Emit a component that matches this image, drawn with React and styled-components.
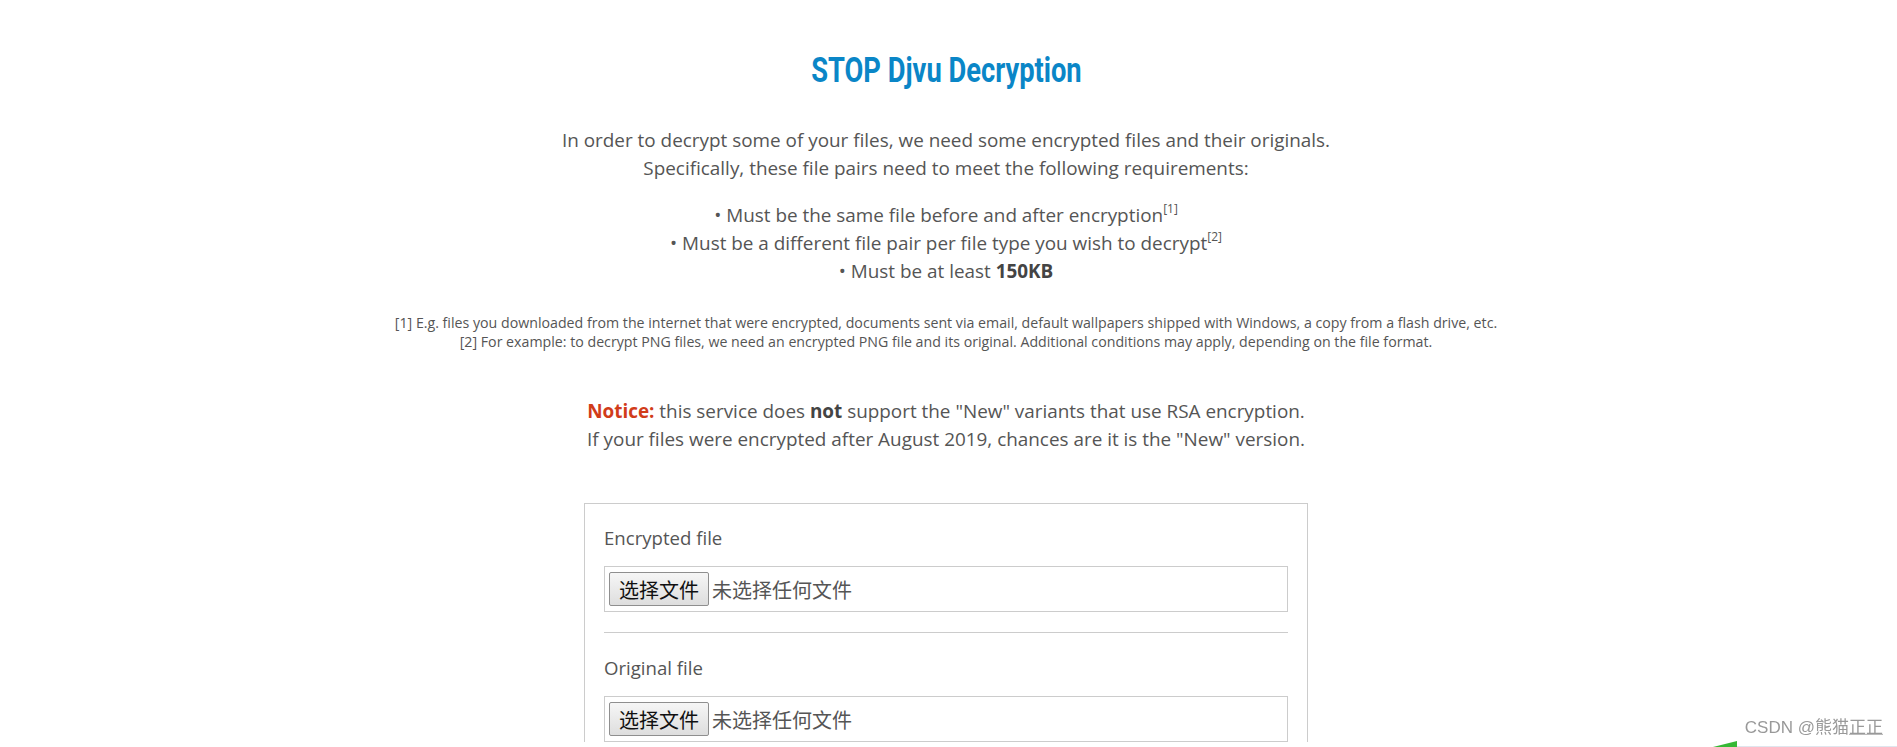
import React from "react";
import styled, { createGlobalStyle } from "styled-components";

const Global = createGlobalStyle`
  html, body {
    margin: 0;
    padding: 0;
    background: #fff;
  }
  body {
    font-family: "Open Sans", "Noto Sans", "Noto Sans CJK SC", sans-serif;
    color: #555;
  }
`;

const Page = styled.main`
  display: flex;
  flex-direction: column;
  align-items: center;
  padding: 51px 5px 0 0;
  text-align: center;
`;

const Title = styled.h1`
  margin: 0;
  font-family: "Roboto", sans-serif;
  font-weight: 700;
  font-size: 35px;
  line-height: 40px;
  color: #0a86c7;
  transform: scaleX(0.78);
`;

const Para = styled.p`
  margin: ${(p) => p.$top || 0}px 0 0;
  font-size: 18.9px;
  line-height: 28px;
  color: #555;
`;

const Sup = styled.sup`
  font-size: 12px;
  line-height: 0;
  vertical-align: 9px;
`;

const Notes = styled.div`
  margin-top: 28px;
  font-size: 14.2px;
  line-height: 19px;
  color: #555;
`;

const Red = styled.strong`
  color: #d13c1a;
`;

const Dark = styled.strong`
  color: #444;
`;

const Card = styled.section`
  margin-top: 50px;
  width: 684px;
  padding: 20px 19px 0;
  border: 1px solid #ccc;
  border-bottom: none;
  text-align: left;
`;

const Label = styled.div`
  font-size: 18.6px;
  line-height: 28px;
  color: #555;
`;

const FileBox = styled.div`
  display: flex;
  align-items: center;
  gap: 3px;
  margin-top: 14px;
  height: 44px;
  padding: 0 4px;
  border: 1px solid #ccc;
`;

const PickButton = styled.button`
  height: 34px;
  padding: 0 9px;
  border: 1px solid #8f8f8f;
  border-radius: 2px;
  background: linear-gradient(#f6f6f6, #dedede);
  font-family: "Noto Sans CJK SC", sans-serif;
  font-size: 20px;
  color: #111;
`;

const NoFile = styled.span`
  font-family: "Noto Sans CJK SC", sans-serif;
  font-size: 20px;
  color: #555;
`;

const Rule = styled.hr`
  margin: 20px 0 21px;
  border: none;
  border-top: 1px solid #ccc;
`;

const Watermark = styled.div`
  position: fixed;
  right: 14px;
  bottom: 9px;
  font-family: "Liberation Sans", "Noto Sans CJK SC", sans-serif;
  font-size: 17px;
  color: #999;
  u {
    text-decoration-color: #bbb;
  }
`;

const Ledge = styled.div`
  position: fixed;
  right: 0;
  bottom: 0;
  width: 163px;
  height: 1px;
  background: #dfe6ee;
`;

const Wedge = styled.div`
  position: fixed;
  right: 160px;
  bottom: 0;
  width: 24px;
  height: 6px;
  background: #35b835;
  clip-path: polygon(0 100%, 100% 0, 100% 100%);
`;

const FileField = ({ label }) => (
  <div>
    <Label>{label}</Label>
    <FileBox>
      <PickButton type="button">选择文件</PickButton>
      <NoFile>未选择任何文件</NoFile>
    </FileBox>
  </div>
);

export default function App() {
  return (
    <>
      <Global />
      <Page>
        <Title>STOP Djvu Decryption</Title>
        <Para $top={35}>
          In order to decrypt some of your files, we need some encrypted files and their originals.
          <br />
          Specifically, these file pairs need to meet the following requirements:
        </Para>
        <Para $top={19}>
          • Must be the same file before and after encryption<Sup>[1]</Sup>
          <br />
          • Must be a different file pair per file type you wish to decrypt<Sup>[2]</Sup>
          <br />
          • Must be at least <Dark>150KB</Dark>
        </Para>
        <Notes>
          [1] E.g. files you downloaded from the internet that were encrypted, documents sent via email, default wallpapers shipped with Windows, a copy from a flash drive, etc.
          <br />
          [2] For example: to decrypt PNG files, we need an encrypted PNG file and its original. Additional conditions may apply, depending on the file format.
        </Notes>
        <Para $top={46}>
          <Red>Notice:</Red> this service does <Dark>not</Dark> support the "New" variants that use RSA encryption.
          <br />
          If your files were encrypted after August 2019, chances are it is the "New" version.
        </Para>
        <Card>
          <FileField label="Encrypted file" />
          <Rule />
          <FileField label="Original file" />
        </Card>
      </Page>
      <Ledge />
      <Wedge />
      <Watermark>
        CSDN @熊猫<u>正正</u>
      </Watermark>
    </>
  );
}
